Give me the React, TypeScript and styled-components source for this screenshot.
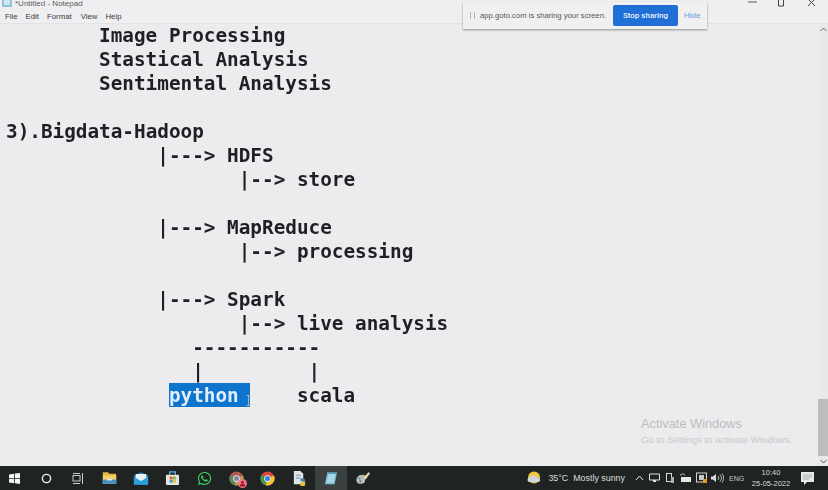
import React, { FC } from 'react';
import styled, { createGlobalStyle } from 'styled-components';
import { FaWhatsapp } from 'react-icons/fa';

const GlobalStyle = createGlobalStyle`
  html, body {
    margin: 0;
    padding: 0;
    width: 828px;
    height: 490px;
    overflow: hidden;
    background: #ecebed;
  }
`;

const menuItems = [
  { label: 'File', gap: 8 },
  { label: 'Edit', gap: 8 },
  { label: 'Format', gap: 9 },
  { label: 'View', gap: 8 },
  { label: 'Help', gap: 0 },
];

// indent is in characters, the notepad is a fixed grid
const editorLines = [
  { indent: 8, text: 'Image Processing' },
  { indent: 8, text: 'Stastical Analysis' },
  { indent: 8, text: 'Sentimental Analysis' },
  { indent: 0, text: '' },
  { indent: 0, text: '3).Bigdata-Hadoop' },
  { indent: 13, text: '|---> HDFS' },
  { indent: 20, text: '|--> store' },
  { indent: 0, text: '' },
  { indent: 13, text: '|---> MapReduce' },
  { indent: 20, text: '|--> processing' },
  { indent: 0, text: '' },
  { indent: 13, text: '|---> Spark' },
  { indent: 20, text: '|--> live analysis' },
  { indent: 16, text: '-----------' },
  { indent: 16, text: '|         |' },
];

const Folder: FC = () => (
  <svg width="15" height="14" viewBox="0 0 18 16">
    <path d="M1 1h6l2 2h8v12H1z" fill="#e8b93f" />
    <rect x="1" y="5" width="16" height="10" fill="#f3cf6b" />
    <rect x="1" y="10" width="16" height="5" fill="#3f8fc4" />
    <rect x="6" y="9" width="6" height="2" fill="#dfe6ea" />
  </svg>
);

const Mail: FC = () => (
  <svg width="16" height="15" viewBox="0 0 18 16">
    <path d="M1 5l8-4 8 4v10H1z" fill="#1c87c9" />
    <path d="M3 3h12v5l-6 3-6-3z" fill="#e8f2f7" />
    <path d="M1 6l8 5 8-5v9H1z" fill="#2aa0dc" />
  </svg>
);

const Store: FC = () => (
  <svg width="15" height="16" viewBox="0 0 16 17">
    <path d="M5 5V2h6v3" fill="none" stroke="#5bb4e5" strokeWidth="1.4" />
    <rect x="1" y="5" width="14" height="11" rx="1" fill="#e8e4da" />
    <rect x="5" y="7" width="3" height="3" fill="#e2542c" />
    <rect x="8.5" y="7" width="3" height="3" fill="#7fb53a" />
    <rect x="5" y="10.5" width="3" height="3" fill="#2a9ad8" />
    <rect x="8.5" y="10.5" width="3" height="3" fill="#f0b92c" />
  </svg>
);

const Chrome: FC<{ dull?: boolean }> = ({ dull }) => (
  <svg width="15" height="15" viewBox="0 0 16 16">
    <circle cx="8" cy="8" r="7.5" fill={dull ? '#b0574e' : '#d9483b'} />
    <path d="M8 8L1.5 4.2A7.5 7.5 0 0 0 6 15.2z" fill={dull ? '#5d8a58' : '#3a9a4a'} />
    <path d="M8 8l6.8-3.2A7.5 7.5 0 0 1 6 15.2z" fill={dull ? '#bba152' : '#f2c233'} />
    <circle cx="8" cy="8" r="3.6" fill="#e8eef5" />
    <circle cx="8" cy="8" r="2.7" fill={dull ? '#8a7f9c' : '#3f7fd9'} />
  </svg>
);

const ChromeProfile: FC = () => (
  <ProfileWrap>
    <Chrome dull />
    <ProfileBadge viewBox="0 0 10 10">
      <circle cx="5" cy="5" r="5" fill="#e8798a" />
      <circle cx="5" cy="3.8" r="1.6" fill="#a3152c" />
      <path d="M2 8.4a3 3 0 0 1 6 0z" fill="#a3152c" />
    </ProfileBadge>
  </ProfileWrap>
);

const PythonFile: FC = () => (
  <svg width="15" height="17" viewBox="0 0 16 18">
    <path d="M2 1h7l3 3v11H2z" fill="#dfe4ea" />
    <rect x="4" y="5" width="5" height="1" fill="#7b8794" />
    <rect x="4" y="8" width="5" height="1" fill="#7b8794" />
    <path d="M9 9h3a2 2 0 0 1 2 2v1H9z" fill="#4a7fb5" />
    <path d="M14 12v3a2 2 0 0 1-2 2H9v-4z" fill="#e8c444" />
  </svg>
);

const NotepadIcon: FC = () => (
  <svg width="14" height="16" viewBox="0 0 16 18">
    <path d="M4 2h11l-3 14H1z" fill="#7fc0d8" />
    <path d="M5 4h8l-2 10H3z" fill="#a9d8e4" />
    <path d="M4 2h11l-.5 2H3.6z" fill="#4f94ae" />
  </svg>
);

const PaintIcon: FC = () => (
  <svg width="16" height="15" viewBox="0 0 18 16">
    <path d="M2 12c-2-5 3-9 8-8 3 .6 4 3 2 4.5-1.5 1 0 3-2 4.5-3 1.5-7 1.5-8-1z" fill="#b9c0c4" />
    <path d="M10 7l5-6 2 1-5 7z" fill="#e8dcae" />
    <circle cx="5" cy="8" r="1.2" fill="#4a8fc4" />
    <circle cx="8" cy="6.5" r="1" fill="#d9a53a" />
    <circle cx="6" cy="11" r="1.1" fill="#5e6a70" />
  </svg>
);

const StartIcon: FC = () => (
  <svg width="11" height="11" viewBox="0 0 11 11">
    <path d="M0 1.5L5 .7V5H0zM5.8.6L11 0v5H5.8zM0 5.8h5v4.4l-5-.7zM5.8 5.8H11V11l-5.2-.7z" fill="#f4f6f6" />
  </svg>
);

const SearchIcon: FC = () => (
  <svg width="11" height="11" viewBox="0 0 12 12">
    <circle cx="6" cy="6" r="4.5" fill="none" stroke="#eef0f0" strokeWidth="1.5" />
  </svg>
);

const TaskViewIcon: FC = () => (
  <svg width="12" height="11" viewBox="0 0 12 11">
    <rect x="1" y="2.5" width="7" height="5.5" fill="none" stroke="#c9cccc" strokeWidth="1" />
    <path d="M1 .5h7M1 10.5h7M10.5 0v11" stroke="#c9cccc" strokeWidth="1" />
  </svg>
);

const WeatherIcon: FC = () => (
  <svg width="14" height="14" viewBox="0 0 14 14">
    <circle cx="7" cy="6.5" r="6" fill="#f2c641" />
    <path d="M2 11a2.5 2.5 0 0 1 1-4.8A3.500 3.500 0 0 1 9.5 7 2 2 0 0 1 12 11z" fill="#c9d6e0" />
  </svg>
);

const TrayChevron: FC = () => (
  <svg width="9" height="6" viewBox="0 0 9 6">
    <path d="M1 5l3.5-4L8 5" fill="none" stroke="#e6e8e8" strokeWidth="1" />
  </svg>
);

const TrayMonitor: FC = () => (
  <svg width="11" height="10" viewBox="0 0 11 10">
    <path d="M.5 1h10v6H.5z" fill="none" stroke="#e0e2e2" />
    <path d="M4 7v2h3V7" fill="#e0e2e2" />
  </svg>
);

const TrayPhone: FC = () => (
  <svg width="10" height="11" viewBox="0 0 10 11">
    <rect x="1.5" y=".5" width="5" height="8" fill="none" stroke="#d6d8d8" />
    <rect x="6" y="4" width="3" height="6" fill="#aeb2b2" />
  </svg>
);

const TrayBattery: FC = () => (
  <svg width="12" height="10" viewBox="0 0 12 10">
    <path d="M0 2.5C2 .5 4 .5 5 2.5" fill="none" stroke="#d6d8d8" />
    <rect x="1" y="4" width="10" height="5" fill="#e6e8e8" />
  </svg>
);

const TrayCamera: FC = () => (
  <svg width="12" height="12" viewBox="0 0 12 12">
    <rect x=".5" y="1" width="10" height="9" fill="none" stroke="#d2d4d4" />
    <rect x="3" y="3" width="5" height="5" fill="#c9cccc" />
    <rect x="7" y="7" width="4" height="4" fill="#dd9a2e" />
  </svg>
);

const TrayVolume: FC = () => (
  <svg width="13" height="10" viewBox="0 0 13 10">
    <path d="M0 3.5h2L5 1v8L2 6.5H0z" fill="#dcdede" />
    <path d="M7 3a3 3 0 0 1 0 4M9 1.5a5 5 0 0 1 0 7M11 .5a7 7 0 0 1 0 9" fill="none" stroke="#dcdede" strokeWidth=".8" />
  </svg>
);

const NotifyIcon: FC = () => (
  <svg width="13" height="13" viewBox="0 0 13 13">
    <path d="M0 0h13v10H6l-3 3v-3H0z" fill="#e8eaea" />
    <path d="M2 3h9M2 5h9M2 7h6" stroke="#9aa0a0" strokeWidth=".8" />
  </svg>
);

const taskbarApps: { key: string; icon: React.ReactNode; active?: boolean }[] = [
  { key: 'start', icon: <StartIcon /> },
  { key: 'search', icon: <SearchIcon /> },
  { key: 'tasks', icon: <TaskViewIcon /> },
  { key: 'folder', icon: <Folder /> },
  { key: 'mail', icon: <Mail /> },
  { key: 'store', icon: <Store /> },
  { key: 'whatsapp', icon: <FaWhatsapp size={15} color="#3ed163" /> },
  { key: 'profile', icon: <ChromeProfile /> },
  { key: 'chrome', icon: <Chrome /> },
  { key: 'python', icon: <PythonFile /> },
  { key: 'notepad', icon: <NotepadIcon />, active: true },
  { key: 'paint', icon: <PaintIcon /> },
];

const trayIcons = [
  <TrayChevron key="chevron" />,
  <TrayMonitor key="monitor" />,
  <TrayPhone key="phone" />,
  <TrayBattery key="battery" />,
  <TrayCamera key="camera" />,
  <TrayVolume key="volume" />,
];

const App: FC = () => (
  <Page>
    <GlobalStyle />
    <TitleBar>
      <TitleIcon viewBox="0 0 11 8">
        <rect x="0" y="-2" width="10" height="9" fill="#8fc3d8" />
        <rect x="2" y="0" width="6" height="5" fill="#cfe6ee" />
      </TitleIcon>
      <TitleText>*Untitled - Notepad</TitleText>
      <WindowControls>
        <WindowControl>
          <svg width="9" height="9" viewBox="0 0 9 9">
            <path d="M0 2h9" stroke="#555" />
          </svg>
        </WindowControl>
        <WindowControl>
          <svg width="9" height="9" viewBox="0 0 9 9">
            <path d="M1.5 0v6h5V0" fill="none" stroke="#444" />
          </svg>
        </WindowControl>
        <WindowControl>
          <svg width="9" height="9" viewBox="0 0 9 9">
            <path d="M1-1l7 7M8-1L1 6" stroke="#444" />
          </svg>
        </WindowControl>
      </WindowControls>
    </TitleBar>
    <MenuBar>
      {menuItems.map((item) => (
        <MenuItem key={item.label} gap={item.gap}>
          {item.label}
        </MenuItem>
      ))}
    </MenuBar>
    <EditorRow>
      <Editor>
        {editorLines.map((line, index) => (
          <EditorLine key={index} indent={line.indent}>
            {line.text}
          </EditorLine>
        ))}
        <EditorLine indent={14}>
          <Selected>python </Selected>
          <Word indent={4}>scala</Word>
        </EditorLine>
      </Editor>
      <ScrollTrack>
        <ScrollArrow>
          <svg width="7" height="5" viewBox="0 0 7 5">
            <path d="M.5 4l3-3 3 3" fill="none" stroke="#666" />
          </svg>
        </ScrollArrow>
        <ScrollThumb />
        <ScrollArrow>
          <svg width="7" height="5" viewBox="0 0 7 5">
            <path d="M.5 1l3 3 3-3" fill="none" stroke="#555" />
          </svg>
        </ScrollArrow>
      </ScrollTrack>
    </EditorRow>
    <Taskbar>
      <AppStrip>
        {taskbarApps.map((app) => (
          <AppSlot key={app.key} active={app.active}>
            {app.icon}
          </AppSlot>
        ))}
      </AppStrip>
      <Tray>
        <WeatherIcon />
        <WeatherText>35°C&nbsp; Mostly sunny</WeatherText>
        <TrayIcons>
          {trayIcons.map((icon) => (
            <TraySlot key={icon.key}>{icon}</TraySlot>
          ))}
        </TrayIcons>
        <Lang>ENG</Lang>
        <Clock>
          <span>10:40</span>
          <span>25-05-2022</span>
        </Clock>
        <NotifySlot>
          <NotifyIcon />
        </NotifySlot>
      </Tray>
    </Taskbar>

    <ShareBar>
      <GripMark />
      <ShareText>app.goto.com is sharing your screen.</ShareText>
      <StopButton>Stop sharing</StopButton>
      <HideLink>Hide</HideLink>
    </ShareBar>

    <Watermark>
      <WatermarkTitle>Activate Windows</WatermarkTitle>
      <WatermarkText>Go to Settings to activate Windows.</WatermarkText>
    </Watermark>

    <IBeam viewBox="0 0 5 11">
      <path d="M.5.5h4M2.5.5v10M.5 10.5h4" fill="none" stroke="#aab4be" strokeWidth="1" />
    </IBeam>
  </Page>
);

export default App;

const Page = styled.div`
  position: relative;
  width: 828px;
  height: 490px;
  display: flex;
  flex-direction: column;
  overflow: hidden;
  background: #ecebed;
  font-family: 'Liberation Sans', Arial, sans-serif;
`;

const TitleBar = styled.div`
  height: 10px;
  flex: none;
  display: flex;
  align-items: flex-start;
  overflow: hidden;
  background: #efeef0;
`;

const TitleIcon = styled.svg`
  width: 11px;
  height: 8px;
  margin-left: 2px;
  flex: none;
`;

const TitleText = styled.span`
  margin-left: 2px;
  font-size: 8px;
  line-height: 7px;
  color: #5d5d60;
`;

const WindowControls = styled.div`
  margin-left: auto;
  margin-right: 2px;
  display: flex;
`;

const WindowControl = styled.div`
  width: 29.5px;
  height: 10px;
  display: flex;
  justify-content: center;
`;

const MenuBar = styled.div`
  height: 13px;
  flex: none;
  display: flex;
  align-items: center;
  padding-left: 5px;
  background: #efeef0;
  border-bottom: 1px solid #e3e2e4;
`;

const MenuItem = styled.span<{ gap: number }>`
  margin-right: ${(props) => props.gap}px;
  font-size: 7.8px;
  color: #3c3c40;
`;

const EditorRow = styled.div`
  flex: 1;
  min-height: 0;
  display: flex;
`;

const Editor = styled.div`
  flex: 1;
  padding-left: 6px;
  font-family: 'DejaVu Sans Mono', 'Liberation Mono', monospace;
  font-size: 19.33px;
  font-weight: 700;
  line-height: 24px;
  color: #1f2024;
  filter: blur(0.45px);
`;

const EditorLine = styled.div<{ indent: number }>`
  height: 24px;
  padding-left: ${(props) => props.indent}ch;
  white-space: pre;
`;

const Word = styled.span<{ indent: number }>`
  margin-left: ${(props) => props.indent}ch;
`;

const Selected = styled.span`
  background: #0f74cc;
  box-shadow: 0 -1px 0 #0f74cc;
  color: #dfeefa;
`;

const ScrollTrack = styled.div`
  width: 10px;
  flex: none;
  display: flex;
  flex-direction: column;
  background: #e9e8ea;
`;

const ScrollArrow = styled.div`
  height: 10px;
  flex: none;
  display: flex;
  align-items: center;
  justify-content: center;
`;

const ScrollThumb = styled.div`
  height: 57px;
  margin-top: auto;
  background: #bdbdbf;
`;

const Taskbar = styled.div`
  height: 24px;
  flex: none;
  display: flex;
  align-items: stretch;
  background: #1f2423;
`;

const AppStrip = styled.div`
  margin-left: -1px;
  display: grid;
  grid-template-columns: repeat(12, 31.64px);
`;

const AppSlot = styled.div<{ active?: boolean }>`
  display: flex;
  align-items: center;
  justify-content: center;
  background: ${(props) => (props.active ? '#3b4140' : 'transparent')};
`;

const ProfileWrap = styled.div`
  position: relative;
  width: 15px;
  height: 15px;
  line-height: 0;
`;

const ProfileBadge = styled.svg`
  position: absolute;
  right: -3px;
  bottom: -2px;
  width: 9px;
  height: 9px;
`;

const Tray = styled.div`
  margin-left: auto;
  display: flex;
  align-items: center;
`;

const WeatherText = styled.span`
  margin-left: 7px;
  width: 77px;
  font-size: 8.9px;
  color: #dcdedd;
  white-space: nowrap;
`;

const TrayIcons = styled.div`
  margin-left: 6px;
  display: grid;
  grid-template-columns: repeat(6, 15.6px);
`;

const TraySlot = styled.div`
  display: flex;
  align-items: center;
  justify-content: center;
`;

const Lang = styled.span`
  margin-left: 4px;
  width: 15px;
  font-size: 7px;
  color: #c9cbca;
`;

const Clock = styled.div`
  margin-left: 8px;
  width: 38px;
  display: flex;
  flex-direction: column;
  align-items: center;
  font-size: 7.5px;
  line-height: 11px;
  color: #d6d8d7;
  white-space: nowrap;
`;

const NotifySlot = styled.div`
  width: 38px;
  padding-right: 4px;
  box-sizing: border-box;
  display: flex;
  justify-content: center;
`;

const ShareBar = styled.div`
  position: absolute;
  left: 463px;
  top: 2px;
  width: 244px;
  height: 27px;
  box-sizing: border-box;
  display: flex;
  align-items: center;
  padding-left: 7px;
  background: #f0f0f1;
  box-shadow: 0 1px 2px rgba(0, 0, 0, 0.4);
`;

const GripMark = styled.div`
  width: 3px;
  height: 7px;
  border-left: 1px solid #b5b5b8;
  border-right: 1px solid #b5b5b8;
`;

const ShareText = styled.span`
  margin-left: 5px;
  width: 133px;
  font-size: 7.7px;
  color: #55565a;
  white-space: nowrap;
`;

const StopButton = styled.div`
  width: 65px;
  height: 21px;
  display: flex;
  align-items: center;
  justify-content: center;
  border-radius: 2px;
  background: #1f6fd6;
  color: #eaf2fc;
  font-family: Roboto, 'Liberation Sans', sans-serif;
  font-size: 8px;
  font-weight: 500;
`;

const HideLink = styled.span`
  margin-left: 6px;
  font-size: 8px;
  color: #5f9ae2;
`;

const Watermark = styled.div`
  position: absolute;
  left: 641px;
  top: 416px;
  display: flex;
  flex-direction: column;
  gap: 2px;
  pointer-events: none;
`;

const WatermarkTitle = styled.span`
  font-size: 12.8px;
  line-height: 16px;
  color: #bdbdc0;
`;

const WatermarkText = styled.span`
  font-size: 9.6px;
  line-height: 12px;
  color: #c9c9cc;
`;

const IBeam = styled.svg`
  position: absolute;
  left: 246px;
  top: 395px;
  width: 5px;
  height: 11px;
`;
